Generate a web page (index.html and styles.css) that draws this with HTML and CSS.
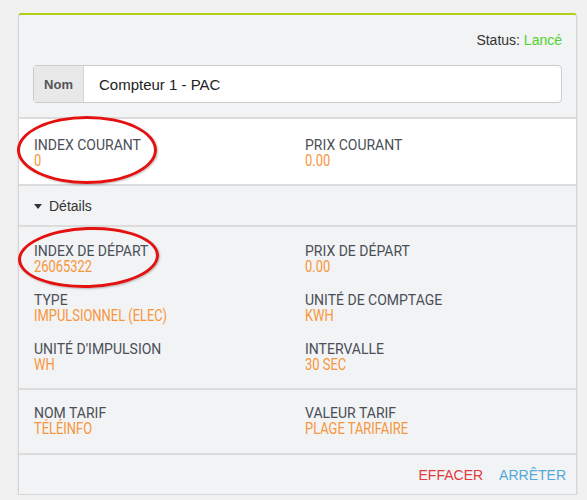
FILE: index.html
```html
<!DOCTYPE html>
<html lang="fr">
<head>
    <meta charset="UTF-8">
    <title>Compteur</title>
    <link rel="stylesheet" href="styles.css">
</head>
<body>
    <div class="page">
        <div class="card">
            <div class="card-head">
                <div class="status">Status: <span class="status-ok">Lancé</span></div>
                <div class="input-group">
                    <span class="addon">Nom</span>
                    <span class="field">Compteur 1 - PAC</span>
                </div>
            </div>

            <div class="fields current">
                <div class="item">
                    <div class="label">Index courant</div>
                    <div class="value">0</div>
                </div>
                <div class="item">
                    <div class="label">Prix courant</div>
                    <div class="value">0.00</div>
                </div>
            </div>

            <div class="details-bar">
                <span class="caret"></span>
                <span>Détails</span>
            </div>

            <div class="fields details">
                <div class="item">
                    <div class="label">Index de départ</div>
                    <div class="value">26065322</div>
                </div>
                <div class="item">
                    <div class="label">Prix de départ</div>
                    <div class="value">0.00</div>
                </div>
                <div class="item">
                    <div class="label">Type</div>
                    <div class="value">Impulsionnel (elec)</div>
                </div>
                <div class="item">
                    <div class="label">Unité de comptage</div>
                    <div class="value">kwh</div>
                </div>
                <div class="item">
                    <div class="label">Unité d'impulsion</div>
                    <div class="value">wh</div>
                </div>
                <div class="item">
                    <div class="label">Intervalle</div>
                    <div class="value">30 sec</div>
                </div>
            </div>

            <div class="fields tarif">
                <div class="item">
                    <div class="label">Nom tarif</div>
                    <div class="value">Téléinfo</div>
                </div>
                <div class="item">
                    <div class="label">Valeur tarif</div>
                    <div class="value">Plage tarifaire</div>
                </div>
            </div>

            <div class="card-foot">
                <span class="btn btn-red">Effacer</span>
                <span class="btn btn-blue">Arrêter</span>
            </div>
        </div>

        <!-- red hand-drawn circles over the screenshot -->
        <div class="mark mark-1"></div>
        <div class="mark mark-2"></div>
    </div>
</body>
</html>
```

FILE: styles.css
```css
body {
    margin: 0;
    padding: 0;
    background-color: #f1f1f1;
    font-family: 'Liberation Sans', Arial, sans-serif;
}
.page {
    position: relative;
    padding-top: 13px;
    padding-left: 18px;
}
.card {
    width: 557px;
    background-color: #f2f3f5;
    border: 1px solid #d6d6d6;
    border-top: 2px solid #b5cc18;
    border-radius: 3px 3px 0 0;
    box-shadow: 0 2px 2px rgba(0, 0, 0, 0.12);
}
.card-head {
    padding: 17px 14px 14px 14px;
    border-bottom: 2px solid #dcdcdc;
}
.status {
    text-align: right;
    font-size: 14px;
    line-height: 16px;
    color: #333;
    margin-bottom: 17px;
}
.status-ok {
    color: #4fd22c;
}
.input-group {
    display: flex;
    height: 36px;
    border: 1px solid #cccccc;
    border-radius: 4px;
    background-color: #fff;
    overflow: hidden;
}
.addon {
    width: 49px;
    background-color: #e8e8e8;
    border-right: 1px solid #d6d6d6;
    display: flex;
    align-items: center;
    justify-content: center;
    font-weight: bold;
    font-size: 13px;
    color: #555;
}
.field {
    display: flex;
    align-items: center;
    padding-left: 15px;
    font-size: 15px;
    color: #222;
}
.fields {
    display: grid;
    grid-template-columns: 271px 1fr;
    padding-left: 15px;
    row-gap: 19px;
    font-family: Roboto, 'Liberation Sans', sans-serif;
}
.current {
    background-color: #fff;
    padding-top: 19px;
    padding-bottom: 16px;
    border-bottom: 2px solid #dcdcdc;
}
.details {
    padding-top: 17px;
    padding-bottom: 16px;
    border-top: 2px solid #dcdcdc;
    border-bottom: 2px solid #dcdcdc;
}
.tarif {
    padding-top: 16px;
    padding-bottom: 17px;
    border-bottom: 2px solid #dcdcdc;
}
.label {
    text-transform: uppercase;
    font-size: 14px;
    line-height: 14px;
    color: #4a4f57;
}
.value {
    text-transform: uppercase;
    font-size: 17px;
    line-height: 16px;
    color: #f7953a;
    transform: scaleX(0.76);
    transform-origin: left center;
    white-space: nowrap;
}
.details-bar {
    display: flex;
    align-items: center;
    height: 39px;
    padding-left: 15px;
    font-size: 14px;
    color: #333;
}
.caret {
    width: 0;
    height: 0;
    border-left: 4px solid transparent;
    border-right: 4px solid transparent;
    border-top: 5px solid #333;
    margin-right: 7px;
    margin-top: 2px;
}
.card-foot {
    display: flex;
    justify-content: flex-end;
    align-items: center;
    gap: 16px;
    height: 39px;
    padding-right: 10px;
}
.btn {
    text-transform: uppercase;
    font-size: 14px;
}
.btn-red {
    color: #e23b3b;
}
.btn-blue {
    color: #53a9d6;
}
.mark {
    position: absolute;
    border: 3px solid #e41111;
    border-radius: 50%;
    box-shadow: 1px 1px 2px rgba(0, 0, 0, 0.25);
}
.mark-1 {
    left: 17px;
    top: 116px;
    width: 134px;
    height: 62px;
}
.mark-2 {
    left: 18px;
    top: 227px;
    width: 135px;
    height: 55px;
    transform: rotate(-2deg);
}
```
